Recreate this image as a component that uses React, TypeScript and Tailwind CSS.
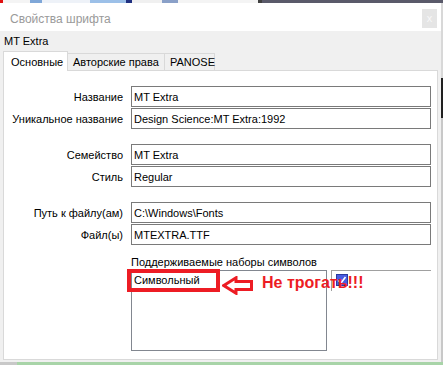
import React from "react";

const font = { fontFamily: '"Liberation Sans", Arial, sans-serif' };

function Field({ label, value }: { label: string; value: string }) {
  return (
    <div className="flex items-center h-[21px]">
      <div className="w-[119px] text-right text-[11px] leading-[16px] text-black whitespace-nowrap">
        {label}
      </div>
      <div className="ml-[8px] w-[300px] h-[21px] border border-[#7a7a7a] bg-white px-[2px] flex items-center text-[11px] leading-[16px] text-black whitespace-nowrap">
        {value}
      </div>
    </div>
  );
}

export default function App() {
  return (
    <div
      className="w-[443px] h-[365px] overflow-hidden flex flex-col bg-[#f0f0f0]"
      style={font}
    >
      {/* desktop behind the dialog */}
      <div className="h-[3px] flex">
        <div className="w-[3px] bg-[#e01010]" />
        <div className="w-[27px] bg-[#f4f4f4]" />
        <div className="w-[12px] bg-[#7fa7d8]" />
        <div className="w-[48px] bg-[#eef2f8]" />
        <div className="w-[36px] bg-[#9cc0e8]" />
        <div className="w-[6px] bg-[#203080]" />
        <div className="w-[30px] bg-[#f0f0f0]" />
        <div className="w-[16px] bg-[#8aa0c8]" />
        <div className="w-[80px] bg-[#f4f4f4]" />
        <div className="w-[4px] bg-[#404040]" />
        <div className="flex-1 bg-[#5a5a6a]" />
      </div>

      <div className="flex flex-1 min-h-0">
        <div className="w-[441px] flex flex-col bg-[#f0f0f0]">
          {/* title bar */}
          <div className="h-[28px] bg-white flex items-start justify-between pl-[10px] pr-[4px]">
            <span className="mt-[8px] text-[12px] leading-[16px] text-[#9a9a9a] whitespace-nowrap">
              Свойства шрифта
            </span>
            <div className="mt-[6px] w-[15px] h-[19px] bg-[#e5e5e5] flex items-center justify-center text-[11px] leading-none text-[#f8f8f8]">
              x
            </div>
          </div>

          {/* client area */}
          <div className="flex-1 min-h-0 flex flex-col px-[3px] pb-[2px]">
            <div className="h-[20px] flex items-center pl-[1px] text-[11px] leading-[16px] text-black">
              MT Extra
            </div>

            {/* tabs */}
            <div className="h-[19px] flex items-end text-[11px] leading-[16px] text-black whitespace-nowrap">
              <div className="relative z-10 -mb-px h-[20px] w-[65px] bg-white border-t border-l border-r border-[#d9d9d9] flex items-center pl-[7px]">
                Основные
              </div>
              <div className="h-[17px] w-[97px] bg-[#f0f0f0] border-t border-r border-[#d9d9d9] flex items-center pl-[5px]">
                Авторские права
              </div>
              <div className="h-[17px] w-[50px] bg-[#f0f0f0] border-t border-r border-[#d9d9d9] flex items-center pl-[5px]">
                PANOSE
              </div>
            </div>

            {/* tab panel */}
            <div className="relative flex-1 min-h-0 bg-white border border-[#d9d9d9] pt-[15px] flex flex-col">
              <div className="flex flex-col gap-[1px]">
                <Field label="Название" value="MT Extra" />
                <Field label="Уникальное название" value="Design Science:MT Extra:1992" />
              </div>
              <div className="mt-[15px] flex flex-col gap-[1px]">
                <Field label="Семейство" value="MT Extra" />
                <Field label="Стиль" value="Regular" />
              </div>
              <div className="mt-[15px] flex flex-col gap-[1px]">
                <Field label="Путь к файлу(ам)" value="C:\Windows\Fonts" />
                <Field label="Файл(ы)" value="MTEXTRA.TTF" />
              </div>

              <div className="mt-[9px] pl-[127px] h-[16px] text-[11px] leading-[16px] text-black whitespace-nowrap">
                Поддерживаемые наборы символов
              </div>
              <div className="pl-[127px] flex items-start">
                <div className="w-[196px] h-[81px] border border-[#828790] bg-white pl-[2px] pt-[1px] text-[11px] leading-[16px] text-black">
                  Символьный
                </div>
                <div className="ml-[4px] w-[100px] h-[21px] border-t border-l border-[#a0a0a0] pl-[4px] pt-[3px]">
                  <div className="w-[12px] h-[12px] bg-[#4a5ce0] border border-[#2a3aa0] flex items-center justify-center">
                    <svg width="10" height="10" viewBox="0 0 10 10">
                      <path d="M1.5 5.5 L4 8 L8.5 2" stroke="#ffffff" strokeWidth="1.6" fill="none" />
                    </svg>
                  </div>
                </div>
              </div>

              {/* annotation */}
              <div className="absolute left-[123px] top-[198px] w-[93px] h-[23px] border-[4px] border-[#ed1c24]" />
              <svg
                className="absolute left-[218px] top-[205px]"
                width="31"
                height="19"
                viewBox="0 0 31 19"
              >
                <path
                  d="M1.8 9.5 L14 1.8 L14 5.5 L29.5 5.5 L29.5 13.5 L14 13.5 L14 17.2 Z"
                  fill="#ffffff"
                  stroke="#ed1c24"
                  strokeWidth="3"
                  strokeLinejoin="miter"
                />
              </svg>
              <div className="absolute left-[258px] top-[203px] text-[16px] leading-[18px] font-bold text-[#ed1c24] whitespace-nowrap">
                Не трогать!!!
              </div>
            </div>
          </div>
        </div>
        <div className="w-[2px] flex flex-col">
          <div className="h-[75px] bg-[#d8d8d8]" />
          <div className="h-[40px] bg-[#202020]" />
          <div className="flex-1 bg-[#c8c8c8]" />
        </div>
      </div>

      <div className="h-[3px] flex">
        <div className="w-[17px] bg-[#c8c8c8]" />
        <div className="flex-1 bg-[#a8d4a8]" />
      </div>
    </div>
  );
}
